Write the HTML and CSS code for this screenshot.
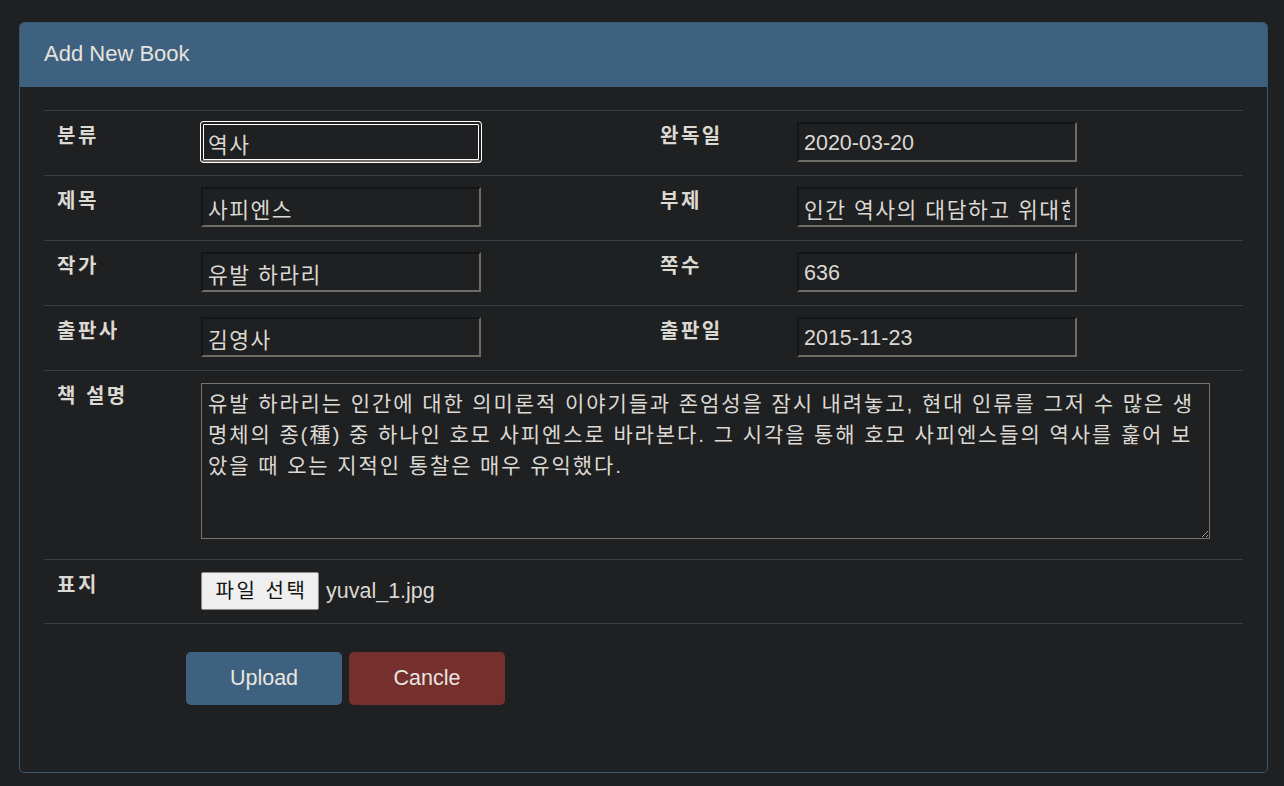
FILE: index.html
```html
<!DOCTYPE html>
<html lang="ko">
<head>
<meta charset="utf-8">
<title>Add New Book</title>
<link rel="stylesheet" href="styles.css">
</head>
<body>
<div class="panel">
  <div class="panel-heading">Add New Book</div>
  <div class="panel-body">
    <div class="form-table">
      <div class="row">
        <div class="label">분류</div>
        <div class="cell"><input class="field ko focused" type="text" value="역사"></div>
        <div class="label">완독일</div>
        <div class="cell"><input class="field" type="text" value="2020-03-20"></div>
      </div>
      <div class="row">
        <div class="label">제목</div>
        <div class="cell"><input class="field ko" type="text" value="사피엔스"></div>
        <div class="label">부제</div>
        <div class="cell"><input class="field ko" type="text" value="인간 역사의 대담하고 위대한 질문"></div>
      </div>
      <div class="row">
        <div class="label">작가</div>
        <div class="cell"><input class="field ko" type="text" value="유발 하라리"></div>
        <div class="label">쪽수</div>
        <div class="cell"><input class="field" type="text" value="636"></div>
      </div>
      <div class="row">
        <div class="label">출판사</div>
        <div class="cell"><input class="field ko" type="text" value="김영사"></div>
        <div class="label">출판일</div>
        <div class="cell"><input class="field" type="text" value="2015-11-23"></div>
      </div>
      <div class="row row-wide">
        <div class="label">책 설명</div>
        <div class="cell cell-span"><textarea class="desc">유발 하라리는 인간에 대한 의미론적 이야기들과 존엄성을 잠시 내려놓고, 현대 인류를 그저 수 많은 생
명체의 종(種) 중 하나인 호모 사피엔스로 바라본다. 그 시각을 통해 호모 사피엔스들의 역사를 훑어 보
았을 때 오는 지적인 통찰은 매우 유익했다.</textarea></div>
      </div>
      <div class="row row-wide row-file">
        <div class="label">표지</div>
        <div class="cell cell-span file-cell"><button class="file-btn" type="button">파일 선택</button><span class="file-name">yuval_1.jpg</span></div>
      </div>
    </div>
    <div class="actions">
      <button class="btn btn-primary" type="button">Upload</button>
      <button class="btn btn-danger" type="button">Cancle</button>
    </div>
  </div>
</div>
</body>
</html>
```
FILE: styles.css
```css
* { box-sizing: border-box; }

html, body {
  margin: 0;
  padding: 0;
  background: #1e2022;
}

body {
  font-family: "Liberation Sans", "Noto Sans CJK KR", sans-serif;
  color: #e0ddd8;
  padding: 22px 16px 0 19px;
}

.panel {
  width: 1249px;
  height: 751px;
  border: 1px solid #3b5670;
  border-radius: 5px;
  overflow: hidden;
  background: #1e2022;
}

.panel-heading {
  height: 64px;
  background: #3e617f;
  color: #e6e3de;
  font-size: 22px;
  line-height: 62px;
  padding-left: 24px;
}

.panel-body {
  padding: 23px 24px 0 24px;
}

.form-table {
  border-bottom: 1px solid #3a3e41;
}

.row {
  display: grid;
  grid-template-columns: 144px 459px 137px 1fr;
  border-top: 1px solid #3a3e41;
  height: 65px;
}

.row-wide {
  grid-template-columns: 144px 1fr;
  height: 189px;
}

.row-file {
  height: 64px;
}

.label {
  padding: 11px 0 0 13px;
  font-family: "Liberation Sans", "Noto Sans CJK KR", sans-serif;
  font-weight: bold;
  font-size: 20px;
  letter-spacing: 2.5px;
  line-height: 28px;
  color: #dcd8d2;
}

.cell {
  padding: 11px 0 0 13px;
}

.field {
  display: block;
  width: 280px;
  height: 40px;
  margin: 0;
  padding: 2px 5px 0 5px;
  background: #1e2022;
  color: #dcd8d2;
  font-family: "Liberation Sans", "Noto Sans CJK KR", sans-serif;
  font-size: 21.5px;
  border-width: 2px;
  border-style: solid;
  border-color: #141516 #6f6b65 #6f6b65 #141516;
  outline: none;
}

.field.ko {
  letter-spacing: 1.5px;
}

.field.focused {
  border-radius: 3px;
  box-shadow: 0 0 0 1px #ffffff, inset 0 0 0 1px #ffffff;
  border-color: #1e2022 #1e2022 #6f6b65 #1e2022;
}

.cell-span {
  padding-top: 12px;
}

.desc {
  display: block;
  width: 1009px;
  height: 156px;
  margin: 0;
  padding: 4px 6px;
  background: #1e2022;
  color: #dcd8d2;
  border: 1px solid #77736d;
  font-family: "Liberation Sans", "Noto Sans CJK KR", sans-serif;
  font-size: 21px;
  letter-spacing: 1.9px;
  line-height: 31px;
  white-space: pre;
  overflow: hidden;
  resize: both;
  color-scheme: dark;
  outline: none;
}

.file-cell {
  display: flex;
  align-items: center;
  height: 50px;
  padding-top: 12px;
}

.file-btn {
  height: 38px;
  width: 118px;
  margin: 0;
  padding: 0 0 0 3px;
  background: #efefef;
  color: #111;
  border: 1px solid #8a8a8a;
  border-radius: 2px;
  font-family: "Liberation Sans", "Noto Sans CJK KR", sans-serif;
  font-size: 20px;
  letter-spacing: 2.6px;
  line-height: 34px;
}

.file-name {
  margin-left: 7px;
  font-size: 21.5px;
  color: #dcd8d2;
}

.actions {
  display: flex;
  gap: 7px;
  padding: 28px 0 0 142px;
}

.btn {
  width: 156px;
  height: 53px;
  border: none;
  border-radius: 5px;
  color: #e8e5e0;
  font-family: "Liberation Sans", sans-serif;
  font-size: 21.5px;
  margin: 0;
}

.btn-primary { background: #3e617f; }
.btn-danger { background: #752f2d; }
```
